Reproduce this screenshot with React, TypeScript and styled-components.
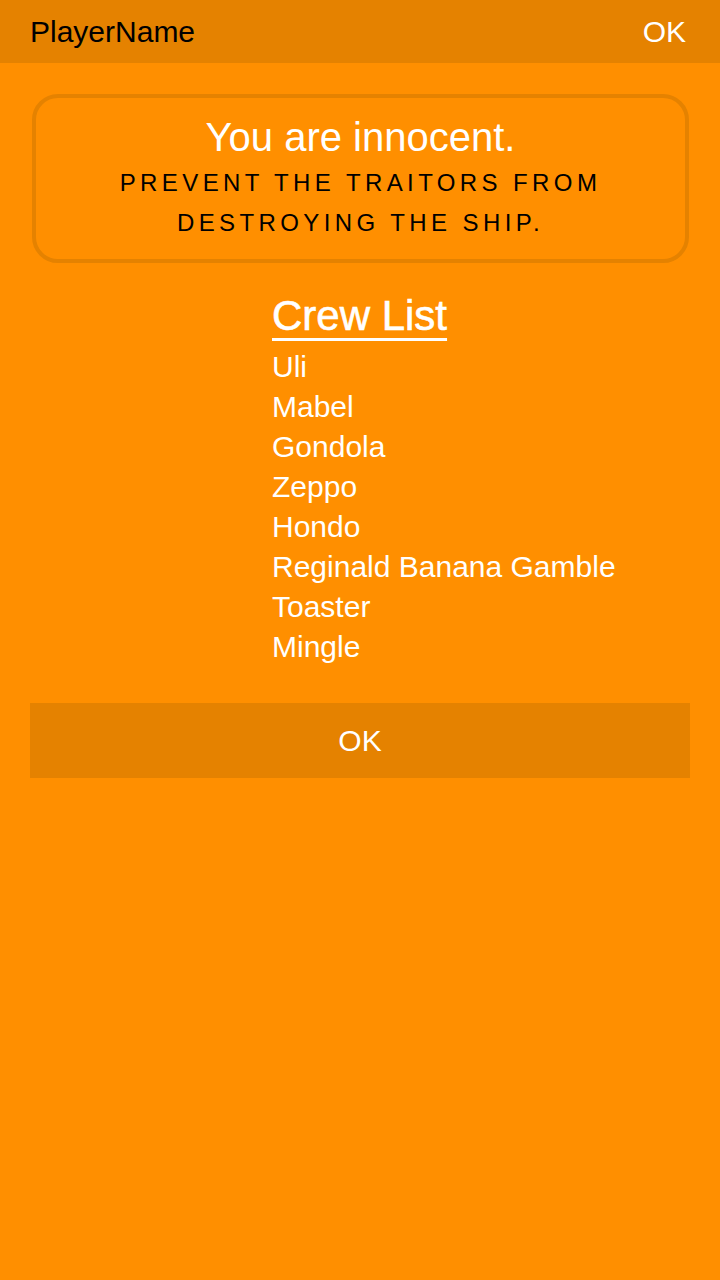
import React from "react";
import styled, { createGlobalStyle } from "styled-components";

const GlobalStyle = createGlobalStyle`
  html, body {
    margin: 0;
    padding: 0;
    background: #ff8f00;
  }
  body {
    font-family: "Liberation Sans", Arial, sans-serif;
  }
  * { box-sizing: border-box; }
`;

const Page = styled.div`
  min-height: 1280px;
  background: #ff8f00;
  display: flex;
  flex-direction: column;
`;

const TopBar = styled.header`
  height: 63px;
  background: #e58200;
  display: flex;
  align-items: center;
  justify-content: space-between;
  padding: 0 34px 0 30px;
  font-size: 30px;
  line-height: 63px;
`;

const PlayerName = styled.span`
  color: #000;
`;

const TopAction = styled.span`
  color: #fff;
`;

const Content = styled.main`
  display: flex;
  flex-direction: column;
  padding: 31px 30px 0;
`;

const RoleCard = styled.section`
  margin: 0 1px 0 2px;
  border: 4px solid #e58200;
  border-radius: 26px;
  padding: 14px 16px 16px;
  text-align: center;
`;

const RoleTitle = styled.h1`
  margin: 0 0 1px;
  font-weight: normal;
  font-size: 40px;
  line-height: 50px;
  color: #fff;
`;

const RoleGoal = styled.p`
  margin: 0;
  font-size: 24px;
  line-height: 40px;
  letter-spacing: 4.4px;
  color: #000;
  text-transform: uppercase;
`;

const Crew = styled.section`
  display: flex;
  flex-direction: column;
  align-items: flex-start;
  padding-left: 242px;
  margin-top: 27px;
`;

const CrewHeading = styled.h2`
  margin: 0 0 5px;
  font-weight: normal;
  font-size: 42px;
  line-height: 52px;
  color: #fff;
  text-decoration: underline;
  text-decoration-thickness: 3px;
  text-underline-offset: 8px;
  -webkit-text-stroke: 0.6px #fff;
`;

const CrewList = styled.ul`
  list-style: none;
  margin: 0;
  padding: 0;
`;

const CrewMember = styled.li`
  font-size: 30px;
  line-height: 40px;
  color: #fff;
`;

const OkButton = styled.button`
  margin-top: 36px;
  height: 75px;
  border: none;
  background: #e58200;
  color: #fff;
  font-family: "Liberation Sans", Arial, sans-serif;
  font-size: 30px;
  cursor: pointer;
`;

const crew = [
  "Uli",
  "Mabel",
  "Gondola",
  "Zeppo",
  "Hondo",
  "Reginald Banana Gamble",
  "Toaster",
  "Mingle",
];

export default function App() {
  return (
    <>
      <GlobalStyle />
      <Page>
        <TopBar>
          <PlayerName>PlayerName</PlayerName>
          <TopAction>OK</TopAction>
        </TopBar>
        <Content>
          <RoleCard>
            <RoleTitle>You are innocent.</RoleTitle>
            <RoleGoal>
              Prevent the traitors from
              <br />
              destroying the ship.
            </RoleGoal>
          </RoleCard>
          <Crew>
            <CrewHeading>Crew List</CrewHeading>
            <CrewList>
              {crew.map((name) => (
                <CrewMember key={name}>{name}</CrewMember>
              ))}
            </CrewList>
          </Crew>
          <OkButton>OK</OkButton>
        </Content>
      </Page>
    </>
  );
}
